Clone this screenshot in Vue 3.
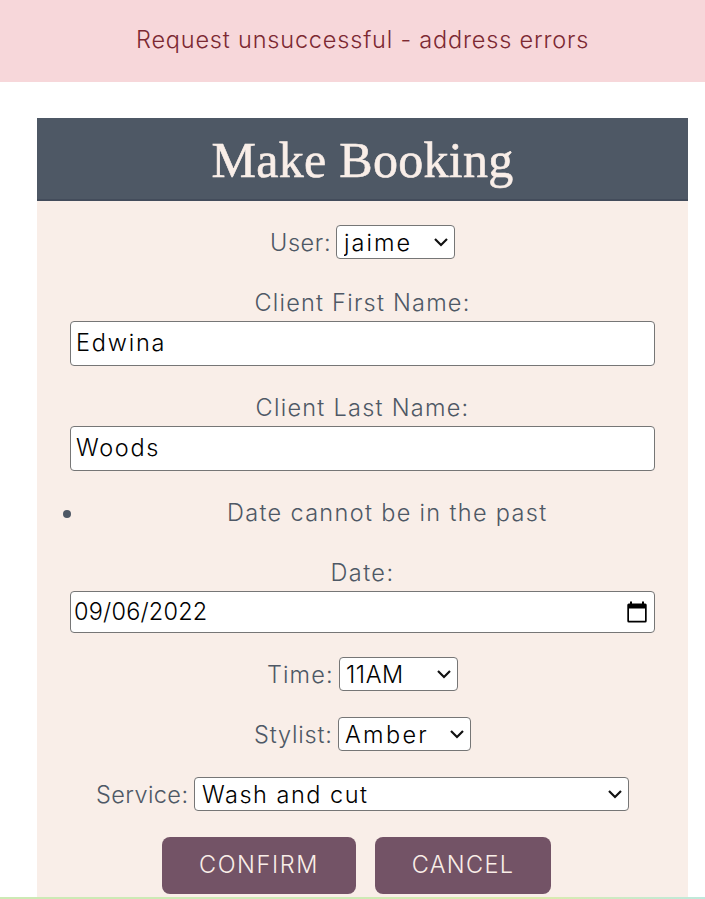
<script setup>
import { ref } from 'vue'

const firstName = ref('Edwina')
const lastName = ref('Woods')
const user = ref('jaime')
const time = ref('11AM')
const stylist = ref('Amber')
const service = ref('Wash and cut')
const date = ref('09/06/2022')
</script>

<template>
  <div class="page">
    <div class="banner" role="alert"><span class="t-banner">Request unsuccessful - address errors</span></div>
    <main class="card">
      <header class="card-head"><h1>Make Booking</h1></header>
      <form class="form" @submit.prevent>
        <div class="row row-user">
          <label class="t-user">User:</label>
          <div class="select s-user">
            <select v-model="user"><option>jaime</option></select>
            <svg viewBox="0 0 16 10"><path d="M2 2L8 8L14 2" /></svg>
          </div>
        </div>
        <div class="stack">
          <label class="t-first">Client First Name:</label>
          <input v-model="firstName" class="text v-first" type="text" />
        </div>
        <div class="stack">
          <label class="t-last">Client Last Name:</label>
          <input v-model="lastName" class="text v-last" type="text" />
        </div>
        <ul class="errors">
          <li><span class="t-error">Date cannot be in the past</span></li>
        </ul>
        <div class="stack date-stack">
          <label class="t-date">Date:</label>
          <div class="date">
            <input v-model="date" type="text" />
            <svg viewBox="0 0 20 22">
              <path fill-rule="evenodd" d="M3 0.5H5V2.5H15V0.5H17V2.5H18.2A1.5 1.5 0 0 1 19.7 4V20A1.5 1.5 0 0 1 18.2 21.5H1.8A1.5 1.5 0 0 1 .3 20V4A1.5 1.5 0 0 1 1.8 2.5H3ZM2 7.5V19.8H18V7.5Z" />
            </svg>
          </div>
        </div>
        <div class="row row-time">
          <label class="t-time">Time:</label>
          <div class="select s-time">
            <select v-model="time"><option>11AM</option></select>
            <svg viewBox="0 0 16 10"><path d="M2 2L8 8L14 2" /></svg>
          </div>
        </div>
        <div class="row row-stylist">
          <label class="t-stylist">Stylist:</label>
          <div class="select s-stylist">
            <select v-model="stylist"><option>Amber</option></select>
            <svg viewBox="0 0 16 10"><path d="M2 2L8 8L14 2" /></svg>
          </div>
        </div>
        <div class="row row-service">
          <label class="t-service">Service:</label>
          <div class="select s-service">
            <select v-model="service"><option>Wash and cut</option></select>
            <svg viewBox="0 0 16 10"><path d="M2 2L8 8L14 2" /></svg>
          </div>
        </div>
        <div class="actions">
          <button class="b-confirm" type="submit">CONFIRM</button>
          <button class="b-cancel" type="button">CANCEL</button>
        </div>
      </form>
    </main>
    <div class="strip"></div>
  </div>
</template>

<style>
body { background: #fff; overflow: hidden; }
</style>

<style scoped>
* { box-sizing: border-box; }
.page {
  display: flex;
  flex-direction: column;
  height: 899px;
  overflow: hidden;
  font-family: Inter, "Open Sans", sans-serif;
  font-size: 23.5px;
  font-weight: 300;
  line-height: 30px;
  color: #4e5865;
}
.banner {
  flex: none;
  height: 82px;
  padding: 25px 0 0 136px;
  background: #f7d7da;
  color: #7c2932;
  white-space: nowrap;
}
.card {
  flex: none;
  width: 651px;
  height: 779px;
  margin: 36px 0 0 37px;
  background: #f9eee8;
}
.card-head {
  display: flex;
  justify-content: center;
  height: 83px;
  background: #4e5865;
  border-bottom: 2px solid #434c5b;
}
h1 {
  margin: 0;
  padding-top: 7px;
  font: 400 50px/70px "Liberation Serif", serif;
  letter-spacing: 0.3px;
  -webkit-text-stroke: 0.6px #f9eee8;
  white-space: nowrap;
  color: #f9eee8;
}
.form { padding: 24px 33px 0; }
.row {
  display: flex;
  height: 34px;
  margin-bottom: 26px;
  white-space: nowrap;
}
.row label { padding-top: 3px; flex: none; }
.row-user { margin-bottom: 29px; }
.row-user label { margin-left: 200px; width: 66px; }
.row-time label { margin-left: 197px; width: 72px; }
.row-stylist label { margin-left: 184px; width: 84px; }
.row-service label { margin-left: 26px; width: 98px; }
.select {
  display: flex;
  align-items: center;
  height: 34px;
  padding: 0 5px 0 6px;
  background: #fff;
  border: 1px solid #767676;
  border-radius: 4px;
}
.select select {
  flex: 1;
  min-width: 0;
  height: 31px;
  padding: 1px 0 0;
  border: 0;
  appearance: none;
  background: none;
  font: inherit;
  letter-spacing: inherit;
  color: #000;
  opacity: 1;
}
.select svg { flex: none; width: 16px; height: 10px; }
.select path { fill: none; stroke: #111; stroke-width: 2.2; }
.s-user { width: 119px; padding-left: 7px; letter-spacing: 2px; }
.s-time { width: 119px; letter-spacing: 0.6px; }
.s-stylist { width: 133px; letter-spacing: 2.3px; }
.s-service { width: 435px; padding-left: 7px; letter-spacing: 1.5px; }
.t-banner { letter-spacing: 0.81px; }
.t-user { letter-spacing: 0.6px; }
.t-first { letter-spacing: 1.22px; }
.t-last { letter-spacing: 1.25px; }
.t-error { letter-spacing: 1.32px; }
.t-date { letter-spacing: 1.4px; }
.t-time { letter-spacing: 1.1px; }
.t-stylist { letter-spacing: 0.8px; }
.t-service { letter-spacing: 0.4px; }
.stack {
  display: flex;
  flex-direction: column;
  align-items: center;
  gap: 3px;
  margin-bottom: 27px;
}
.text, .date {
  width: 585px;
  height: 45px;
  border: 1px solid #767676;
  border-radius: 4px;
  background: #fff;
}
.text {
  padding: 0 5px 2px;
  font: inherit;
  color: #000;
}
.v-first { letter-spacing: 1.8px; }
.v-last { letter-spacing: 1.7px; }
.errors {
  margin: 0 0 30px;
  padding: 0;
  list-style: none;
}
.errors li {
  display: flex;
  align-items: center;
  height: 30px;
  margin-left: -7px;
}
.errors li::before {
  content: "";
  width: 8px;
  height: 8px;
  margin-top: 2px;
  border-radius: 50%;
  background: #4e5865;
}
.errors span { margin-left: 156px; white-space: nowrap; }
.date-stack { margin-bottom: 24px; }
.date {
  display: flex;
  align-items: center;
  height: 42px;
  padding: 0 7px 0 3px;
}
.date input {
  flex: 1;
  min-width: 0;
  padding: 0;
  border: 0;
  background: none;
  font: inherit;
  letter-spacing: 0.2px;
  color: #000;
}
.date svg { width: 20px; height: 22px; }
.actions { display: flex; gap: 19px; padding-left: 92px; }
button {
  height: 57px;
  padding: 0 0 2px;
  border: 0;
  border-radius: 8px;
  background: #735366;
  color: #f9eee8;
  font: inherit;
}
.b-confirm { width: 194px; letter-spacing: 1.6px; }
.b-cancel { width: 176px; letter-spacing: 1.3px; }
.strip {
  flex: none;
  height: 2px;
  background: linear-gradient(90deg, #cdeab5, #cdeab5 50%, #dcebaa 75%, #bfe9dc);
}
</style>
